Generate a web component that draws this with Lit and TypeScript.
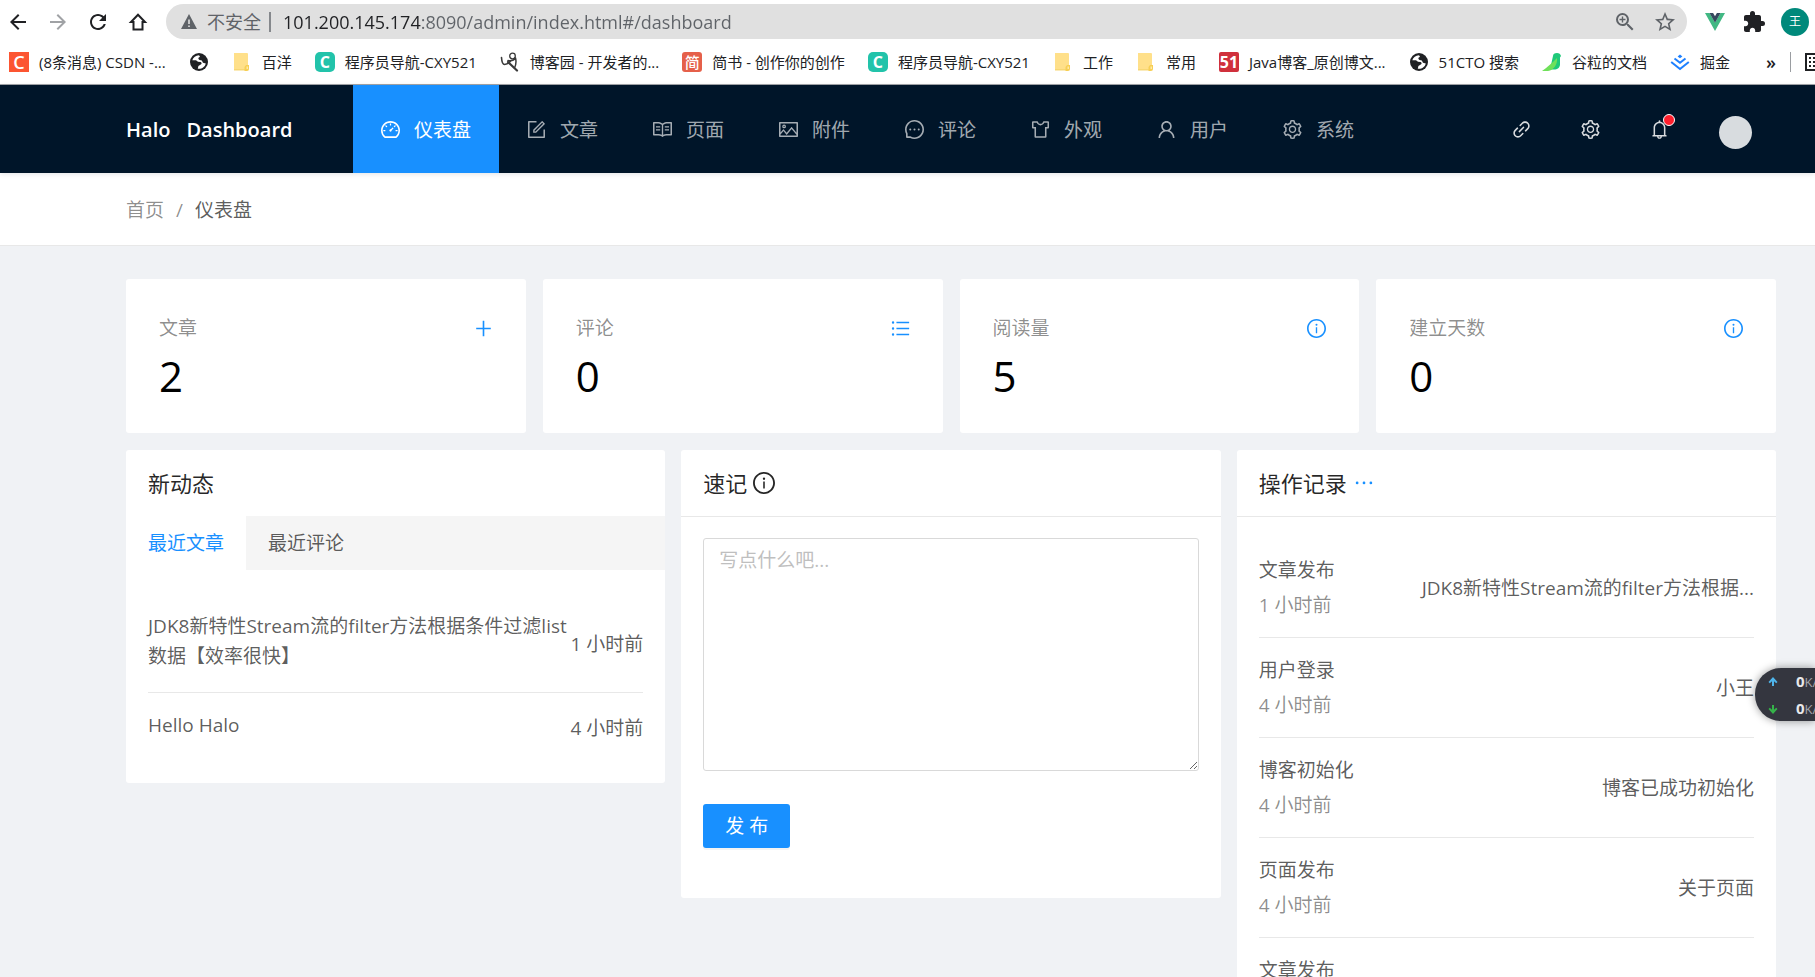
import { LitElement, html, css, svg, nothing, type TemplateResult, type SVGTemplateResult } from "lit";
import { customElement, property, state } from "lit/decorators.js";
import { classMap } from "lit/directives/class-map.js";

/* Outline glyphs, all drawn on a 64 64 896 896 canvas */
const GLYPHS: Record<string, string> = {
  dashboard:
    "M924.8 385.6a446.7 446.7 0 0 0-96-142.4 446.7 446.7 0 0 0-142.4-96C631.1 123.8 572.5 112 512 112s-119.1 11.8-174.4 35.2a446.7 446.7 0 0 0-142.4 96 446.7 446.7 0 0 0-96 142.4C75.8 440.9 64 499.5 64 560c0 132.7 58.3 257.7 159.9 343.1l1.7 1.4c5.8 4.8 13.1 7.5 20.6 7.5h531.7c7.5 0 14.8-2.7 20.6-7.5l1.7-1.4C901.7 817.7 960 692.7 960 560c0-60.5-11.9-119.1-35.2-174.4zM761.4 836H262.6A371.12 371.12 0 0 1 140 560c0-99.4 38.7-192.8 109-263 70.3-70.3 163.7-109 263-109 99.4 0 192.8 38.7 263 109 70.3 70.3 109 163.7 109 263 0 105.6-44.5 205.5-122.6 276zM623.5 421.5a8.03 8.03 0 0 0-11.3 0L527.7 506c-18.7-5-39.4-.2-54.1 14.5a55.95 55.95 0 0 0 0 79.2 55.95 55.95 0 0 0 79.2 0 55.87 55.87 0 0 0 14.5-54.1l84.5-84.5c3.1-3.1 3.1-8.2 0-11.3l-28.3-28.3zM490 320h44c4.4 0 8-3.6 8-8v-80c0-4.4-3.6-8-8-8h-44c-4.4 0-8 3.6-8 8v80c0 4.4 3.6 8 8 8zm260 218v44c0 4.4 3.6 8 8 8h80c4.4 0 8-3.6 8-8v-44c0-4.4-3.6-8-8-8h-80c-4.4 0-8 3.6-8 8zm12.7-197.2l-31.1-31.1a8.03 8.03 0 0 0-11.3 0l-56.6 56.6a8.03 8.03 0 0 0 0 11.3l31.1 31.1c3.1 3.1 8.2 3.1 11.3 0l56.6-56.6c3.1-3.1 3.1-8.2 0-11.3zm-458.6-31.1a8.03 8.03 0 0 0-11.3 0l-31.1 31.1a8.03 8.03 0 0 0 0 11.3l56.6 56.6c3.1 3.1 8.2 3.1 11.3 0l31.1-31.1c3.1-3.1 3.1-8.2 0-11.3l-56.6-56.6zM262 530h-80c-4.4 0-8 3.6-8 8v44c0 4.4 3.6 8 8 8h80c4.4 0 8-3.6 8-8v-44c0-4.4-3.6-8-8-8z",
  form:
    "M904 512h-56c-4.4 0-8 3.6-8 8v320H184V184h320c4.4 0 8-3.6 8-8v-56c0-4.4-3.6-8-8-8H144c-17.7 0-32 14.3-32 32v736c0 17.7 14.3 32 32 32h736c17.7 0 32-14.3 32-32V520c0-4.4-3.6-8-8-8zM355.9 534.9L354 653.8c-.1 8.9 7.1 16.2 16 16.2h.4l118-2.9c2-.1 4-.9 5.4-2.3l415.9-415c3.1-3.1 3.1-8.2 0-11.3L785.4 114.3c-1.6-1.6-3.6-2.3-5.7-2.3s-4.1.8-5.7 2.3l-415.8 415a8.3 8.3 0 0 0-2.3 5.6zm63.5 23.6L779.7 199l45.2 45.1-360.5 359.7-45.7 1.1.7-46.4z",
  read:
    "M928 161H699.2c-49.1 0-97.1 14.1-138.4 40.7L512 233l-48.8-31.3A255.2 255.2 0 0 0 324.8 161H96c-17.7 0-32 14.3-32 32v568c0 17.7 14.3 32 32 32h228.8c49.1 0 97.1 14.1 138.4 40.7l44.4 28.6c1.3.8 2.8 1.3 4.3 1.3s3-.4 4.3-1.3l44.4-28.6C602 807.1 650.1 793 699.2 793H928c17.7 0 32-14.3 32-32V193c0-17.7-14.3-32-32-32zM324.8 721H136V233h188.8c35.4 0 69.8 10.1 99.5 29.2l48.8 31.3 6.9 4.5v462c-47.6-25.6-100.8-39-155.2-39zm563.2 0H699.2c-54.4 0-107.6 13.4-155.2 39V298l6.9-4.5 48.8-31.3c29.7-19.1 64.1-29.2 99.5-29.2H888v488zM396.9 361H211.1c-3.9 0-7.1 3.4-7.1 7.5v45c0 4.1 3.2 7.5 7.1 7.5h185.7c3.9 0 7.1-3.4 7.1-7.5v-45c.1-4.1-3.1-7.5-7-7.5zm223.1 7.5v45c0 4.1 3.2 7.5 7.1 7.5h185.7c3.9 0 7.1-3.4 7.1-7.5v-45c0-4.1-3.2-7.5-7.1-7.5H627.1c-3.9 0-7.1 3.4-7.1 7.5zM396.9 501H211.1c-3.9 0-7.1 3.4-7.1 7.5v45c0 4.1 3.2 7.5 7.1 7.5h185.7c3.9 0 7.1-3.4 7.1-7.5v-45c.1-4.1-3.1-7.5-7-7.5zm416 0H627.1c-3.9 0-7.1 3.4-7.1 7.5v45c0 4.1 3.2 7.5 7.1 7.5h185.7c3.9 0 7.1-3.4 7.1-7.5v-45c.1-4.1-3.1-7.5-7-7.5z",
  picture:
    "M928 160H96c-17.7 0-32 14.3-32 32v640c0 17.7 14.3 32 32 32h832c17.7 0 32-14.3 32-32V192c0-17.7-14.3-32-32-32zm-40 632H136v-39.9l138.5-164.3 150.1 178L658.1 489 888 761.6V792zm0-129.8L664.2 396.8c-3.2-3.8-9-3.8-12.2 0L424.6 666.4l-144-170.7c-3.2-3.8-9-3.8-12.2 0L136 652.7V232h752v430.2zM304 456a88 88 0 1 0 0-176 88 88 0 0 0 0 176zm0-116c15.5 0 28 12.5 28 28s-12.5 28-28 28-28-12.5-28-28 12.5-28 28-28z",
  message:
    "M464 512a48 48 0 1 0 96 0 48 48 0 1 0-96 0zm200 0a48 48 0 1 0 96 0 48 48 0 1 0-96 0zm-400 0a48 48 0 1 0 96 0 48 48 0 1 0-96 0zm661.2-173.6c-22.6-53.7-55-101.9-96.3-143.3a444.35 444.35 0 0 0-143.3-96.3C630.6 75.7 572.2 64 512 64h-2c-60.6.3-119.3 12.3-174.5 35.9a445.35 445.35 0 0 0-142 96.5c-40.9 41.3-73 89.3-95.2 142.8-23 55.4-34.6 114.3-34.3 174.9A449.4 449.4 0 0 0 112 714v152a46 46 0 0 0 46 46h152.1A449.4 449.4 0 0 0 510 960h2.1c59.9 0 118-11.6 172.7-34.3a444.48 444.48 0 0 0 142.8-95.2c41.3-40.9 73.8-88.7 96.5-142 23.6-55.2 35.6-113.9 35.9-174.5.3-60.9-11.5-120-34.8-175.6zm-151.1 438C704 845.8 611 884 512 884h-1.7c-60.3-.3-120.2-15.3-173.1-43.5l-8.4-4.5H188V695.2l-4.5-8.4C155.3 633.9 140.3 574 140 513.7c-.4-99.7 37.7-193.3 107.6-263.8 69.8-70.5 163.1-109.5 262.8-109.9h1.7c50 0 98.5 9.7 144.2 28.9 44.6 18.7 84.6 45.6 119 80 34.3 34.3 61.3 74.4 80 119 19.4 46.2 29.1 95.2 28.9 145.8-.6 99.6-39.7 192.9-110.1 262.7z",
  skin:
    "M870 126H663.8c-17.4 0-32.9 11.9-37 29.3C614.3 208.1 567 246 512 246s-102.3-37.9-114.8-90.7a37.93 37.93 0 0 0-37-29.3H154a44 44 0 0 0-44 44v252a44 44 0 0 0 44 44h75v388a44 44 0 0 0 44 44h478a44 44 0 0 0 44-44V466h75a44 44 0 0 0 44-44V170a44 44 0 0 0-44-44zm-28 268H723v432H301V394H182V198h153.3c28.2 71.2 97.5 120 176.7 120s148.5-48.8 176.7-120H842v196z",
  user:
    "M858.5 763.6a374 374 0 0 0-80.6-119.5 375.63 375.63 0 0 0-119.5-80.6c-.4-.2-.8-.3-1.2-.5C719.5 518 760 444.7 760 362c0-137-111-248-248-248S264 225 264 362c0 82.7 40.5 156 102.8 201.1-.4.2-.8.3-1.2.5-44.8 18.9-85 46-119.5 80.6a375.63 375.63 0 0 0-80.6 119.5A371.7 371.7 0 0 0 136 901.8a8 8 0 0 0 8 8.2h60c4.4 0 7.9-3.5 8-7.8 2-77.2 33-149.5 87.8-204.3 56.7-56.7 132-87.9 212.2-87.9s155.5 31.2 212.2 87.9C779 752.7 810 825 812 902.2c.1 4.4 3.6 7.8 8 7.8h60a8 8 0 0 0 8-8.2c-1-47.8-10.9-94.3-29.5-138.2zM512 534c-45.9 0-89.1-17.9-121.6-50.4S340 407.9 340 362c0-45.9 17.9-89.1 50.4-121.6S466.1 190 512 190s89.1 17.9 121.6 50.4S684 316.1 684 362c0 45.9-17.9 89.1-50.4 121.6S557.9 534 512 534z",
  setting:
    "M924.8 625.7l-65.5-56c3.1-19 4.7-38.4 4.7-57.8s-1.6-38.8-4.7-57.8l65.5-56a32.03 32.03 0 0 0 9.3-35.2l-.9-2.6a443.74 443.74 0 0 0-79.7-137.9l-1.8-2.1a32.12 32.12 0 0 0-35.1-9.5l-81.3 28.9c-30-24.6-63.5-44-99.7-57.6l-15.7-85a32.05 32.05 0 0 0-25.8-25.7l-2.7-.5c-52.1-9.4-106.9-9.4-159 0l-2.7.5a32.05 32.05 0 0 0-25.8 25.7l-15.8 85.4a351.86 351.86 0 0 0-99 57.4l-81.9-29.1a32 32 0 0 0-35.1 9.5l-1.8 2.1a446.02 446.02 0 0 0-79.7 137.9l-.9 2.6c-4.5 12.5-.8 26.5 9.3 35.2l66.3 56.6c-3.1 18.8-4.6 38-4.6 57.1 0 19.2 1.5 38.4 4.6 57.1L99 625.5a32.03 32.03 0 0 0-9.3 35.2l.9 2.6c18.1 50.4 44.9 96.9 79.7 137.9l1.8 2.1a32.12 32.12 0 0 0 35.1 9.5l81.9-29.1c29.8 24.5 63.1 43.9 99 57.4l15.8 85.4a32.05 32.05 0 0 0 25.8 25.7l2.7.5a449.4 449.4 0 0 0 159 0l2.7-.5a32.05 32.05 0 0 0 25.8-25.7l15.7-85a350 350 0 0 0 99.7-57.6l81.3 28.9a32 32 0 0 0 35.1-9.5l1.8-2.1c34.8-41.1 61.6-87.5 79.7-137.9l.9-2.6c4.5-12.3.8-26.3-9.3-35zM788.3 465.9c2.5 15.1 3.8 30.6 3.8 46.1s-1.3 31-3.8 46.1l-6.6 40.1 74.7 63.9a370.03 370.03 0 0 1-42.6 73.6L721 702.8l-31.4 25.8c-23.9 19.6-50.5 35-79.3 45.8l-38.1 14.3-17.9 97a377.5 377.5 0 0 1-85 0l-17.9-97.2-37.8-14.5c-28.5-10.8-55-26.2-78.7-45.7l-31.4-25.9-93.4 33.2c-17-22.9-31.2-47.6-42.6-73.6l75.5-64.5-6.5-40c-2.4-14.9-3.7-30.3-3.7-45.5 0-15.3 1.2-30.6 3.7-45.5l6.5-40-75.5-64.5c11.3-26.1 25.6-50.7 42.6-73.6l93.4 33.2 31.4-25.9c23.7-19.5 50.2-34.9 78.7-45.7l37.9-14.3 17.9-97.2c28.1-3.2 56.8-3.2 85 0l17.9 97 38.1 14.3c28.7 10.8 55.4 26.2 79.3 45.8l31.4 25.8 92.8-32.9c17 22.9 31.2 47.6 42.6 73.6L781.8 426l6.5 39.9zM512 326c-97.2 0-176 78.8-176 176s78.8 176 176 176 176-78.8 176-176-78.8-176-176-176zm79.2 255.2A111.6 111.6 0 0 1 512 614c-29.9 0-58-11.7-79.2-32.8A111.6 111.6 0 0 1 400 502c0-29.9 11.7-58 32.8-79.2C454 401.6 482.1 390 512 390c29.9 0 58 11.6 79.2 32.8A111.6 111.6 0 0 1 624 502c0 29.9-11.7 58-32.8 79.2z",
  link:
    "M574 665.4a8.03 8.03 0 0 0-11.3 0L446.5 781.6c-53.8 53.8-144.6 59.5-204 0-59.5-59.5-53.8-150.2 0-204l116.2-116.2c3.1-3.1 3.1-8.2 0-11.3l-39.8-39.8a8.03 8.03 0 0 0-11.3 0L191.4 526.5c-84.6 84.6-84.6 221.5 0 306s221.5 84.6 306 0l116.2-116.2c3.1-3.1 3.1-8.2 0-11.3L574 665.4zm258.6-474c-84.6-84.6-221.5-84.6-306 0L410.3 307.6a8.03 8.03 0 0 0 0 11.3l39.7 39.7c3.1 3.1 8.2 3.1 11.3 0l116.2-116.2c53.8-53.8 144.6-59.5 204 0 59.5 59.5 53.8 150.2 0 204L665.3 562.6a8.03 8.03 0 0 0 0 11.3l39.8 39.8c3.1 3.1 8.2 3.1 11.3 0l116.2-116.2c84.5-84.6 84.5-221.5 0-306.1zM610.1 372.3a8.03 8.03 0 0 0-11.3 0L372.3 598.7a8.03 8.03 0 0 0 0 11.3l39.6 39.6c3.1 3.1 8.2 3.1 11.3 0l226.4-226.4c3.1-3.1 3.1-8.2 0-11.3l-39.5-39.6z",
  bell:
    "M816 768h-24V428c0-141.1-104.3-257.8-240-277.2V112c0-22.1-17.9-40-40-40s-40 17.9-40 40v38.8C336.3 170.2 232 286.9 232 428v340h-24c-17.7 0-32 14.3-32 32v32c0 4.4 3.6 8 8 8h216c0 61.8 50.2 112 112 112s112-50.2 112-112h216c4.4 0 8-3.6 8-8v-32c0-17.7-14.3-32-32-32zM512 888c-26.5 0-48-21.5-48-48h96c0 26.5-21.5 48-48 48zM304 768V428c0-55.6 21.6-107.8 60.9-147.1S456.4 220 512 220c55.6 0 107.8 21.6 147.1 60.9S720 372.4 720 428v340H304z",
  plus:
    "M482 152h60q8 0 8 8v704q0 8-8 8h-60q-8 0-8-8V160q0-8 8-8zM176 474h672q8 0 8 8v60q0 8-8 8H176q-8 0-8-8v-60q0-8 8-8z",
  list:
    "M912 192H328c-4.4 0-8 3.6-8 8v56c0 4.4 3.6 8 8 8h584c4.4 0 8-3.6 8-8v-56c0-4.4-3.6-8-8-8zm0 284H328c-4.4 0-8 3.6-8 8v56c0 4.4 3.6 8 8 8h584c4.4 0 8-3.6 8-8v-56c0-4.4-3.6-8-8-8zm0 284H328c-4.4 0-8 3.6-8 8v56c0 4.4 3.6 8 8 8h584c4.4 0 8-3.6 8-8v-56c0-4.4-3.6-8-8-8zM104 228a56 56 0 1 0 112 0 56 56 0 1 0-112 0zm0 284a56 56 0 1 0 112 0 56 56 0 1 0-112 0zm0 284a56 56 0 1 0 112 0 56 56 0 1 0-112 0z",
  info:
    "M512 64C264.6 64 64 264.6 64 512s200.6 448 448 448 448-200.6 448-448S759.4 64 512 64zm0 820c-205.4 0-372-166.6-372-372s166.6-372 372-372 372 166.6 372 372-166.6 372-372 372zM464 336a48 48 0 1 0 96 0 48 48 0 1 0-96 0zm72 112h-48c-4.4 0-8 3.6-8 8v272c0 4.4 3.6 8 8 8h48c4.4 0 8-3.6 8-8V456c0-4.4-3.6-8-8-8z",
  ellipsis:
    "M176 511a56 56 0 1 0 112 0 56 56 0 1 0-112 0zm280 0a56 56 0 1 0 112 0 56 56 0 1 0-112 0zm280 0a56 56 0 1 0 112 0 56 56 0 1 0-112 0z",
};

const glyph = (name: string): TemplateResult => html`
  <svg class="glyph" viewBox="64 64 896 896" aria-hidden="true"><path d=${GLYPHS[name]}></path></svg>
`;

const box24 = (content: SVGTemplateResult): TemplateResult => html`
  <svg class="tool-icon" viewBox="0 0 24 24" aria-hidden="true">${content}</svg>
`;

const favicon = (content: SVGTemplateResult): TemplateResult => html`
  <svg class="favicon" viewBox="0 0 20 20" aria-hidden="true">${content}</svg>
`;

const folder = favicon(svg`
  <path d="M2 1h13a1 1 0 0 1 1 1v16H2z" fill="#ffe08a"></path>
  <path d="M2 17h12v1.500H2z" fill="#f7d774"></path>
  <path d="M14 13h3v4a2 2 0 0 1-2 2h-2.500v-4z" fill="#f7cf55"></path>
  <path d="M14.500 14.500h1.500v2.500h-1.500z" fill="#ffe9a8"></path>
`);

const globe = favicon(svg`
  <circle cx="10" cy="10" r="9" fill="#202124"></circle>
  <path d="M10 3.200C6.800 3.400 4.200 5.300 3.300 8.200H7l2 1.600 2.600.2c1.200.3 1.400 2 .2 2.600L9.400 14l-.6 2.700c3.800.6 7.200-1.700 8-5.200l-2.800-.8-1.200-2.300-2.800-.6-.8-1.700L11 4.800z" fill="#fff"></path>
`);

const tile = (text: string, kind: string): TemplateResult =>
  html`<span class="tile ${kind}" aria-hidden="true">${text}</span>`;

interface Bookmark {
  icon: TemplateResult;
  label: string;
}

const BOOKMARKS: Bookmark[] = [
  { icon: tile("C", "csdn"), label: "(8条消息) CSDN -..." },
  { icon: globe, label: "" },
  { icon: folder, label: "百洋" },
  { icon: tile("C", "cxy"), label: "程序员导航-CXY521" },
  {
    icon: favicon(svg`
      <g fill="none" stroke="#3a3a3a" stroke-linecap="round" stroke-linejoin="round">
        <path d="M1.500 5.500c.3 4.500 1 7 3 7s4.500-1.500 6-3.500" stroke-width="1.600"></path>
        <circle cx="12.500" cy="4" r="2.800" stroke-width="1.300"></circle>
        <path d="M8 8.500c3 .5 6 0 7.500-2.500 1 4 .5 7-1 10" stroke-width="1.500"></path>
        <path d="M8 10l9 8.500" stroke-width="2.200"></path>
      </g>`),
    label: "博客园 - 开发者的...",
  },
  { icon: tile("简", "jian"), label: "简书 - 创作你的创作" },
  { icon: tile("C", "cxy"), label: "程序员导航-CXY521" },
  { icon: folder, label: "工作" },
  { icon: folder, label: "常用" },
  { icon: tile("51", "cto"), label: "Java博客_原创博文..." },
  { icon: globe, label: "51CTO 搜索" },
  {
    icon: favicon(svg`
      <path d="M11 4c0-2 1.500-3 4-3 2.200 0 3.500 1.200 4 3l-1 1.500v7c0 3-2.500 5-6 5H8z" fill="#1fc979"></path>
      <path d="M15 6c.8 6-3 12-9 13H0c5-3.500 10-8 15-13z" fill="#6fe05a"></path>`),
    label: "谷粒的文档",
  },
  {
    icon: favicon(svg`
      <path d="M10 2.500l2.400 1.900L10 6.300 7.600 4.400z" fill="#1e80ff"></path>
      <path d="M4.500 6.500L10 10.800l5.500-4.300M1.200 10L10 17l8.800-7" fill="none" stroke="#1e80ff" stroke-width="2"></path>`),
    label: "掘金",
  },
];

const NAV = [
  { icon: "dashboard", label: "仪表盘" },
  { icon: "form", label: "文章" },
  { icon: "read", label: "页面" },
  { icon: "picture", label: "附件" },
  { icon: "message", label: "评论" },
  { icon: "skin", label: "外观" },
  { icon: "user", label: "用户" },
  { icon: "setting", label: "系统" },
];

const STATS = [
  { label: "文章", value: 2, icon: "plus", action: "写文章" },
  { label: "评论", value: 0, icon: "list", action: "查看评论" },
  { label: "阅读量", value: 5, icon: "info", action: "说明" },
  { label: "建立天数", value: 0, icon: "info", action: "说明" },
];

const POSTS = [
  { title: "JDK8新特性Stream流的filter方法根据条件过滤list数据【效率很快】", time: "1 小时前" },
  { title: "Hello Halo", time: "4 小时前" },
];

const LOGS = [
  { type: "文章发布", time: "1 小时前", content: "JDK8新特性Stream流的filter方法根据..." },
  { type: "用户登录", time: "4 小时前", content: "小王" },
  { type: "博客初始化", time: "4 小时前", content: "博客已成功初始化" },
  { type: "页面发布", time: "4 小时前", content: "关于页面" },
  { type: "文章发布", time: "4 小时前", content: "" },
];

const base = css`
  *, *::before, *::after { box-sizing: border-box; }
  a { color: inherit; text-decoration: none; }
  button { font: inherit; color: inherit; background: none; border: 0; padding: 0; cursor: pointer; }
  ul, h1, h2, p { margin: 0; padding: 0; list-style: none; font: inherit; }
  .glyph { display: block; width: 19px; height: 19px; flex: none; fill: currentColor; }
`;

@customElement("browser-bar")
class BrowserBar extends LitElement {
  static styles = [base, css`
    :host { display: block; flex: none; background: #fff; border-bottom: 1px solid #a3a5a8; color: #202124; overflow: hidden; }
    .toolbar { display: flex; align-items: center; gap: 16px; padding: 4px 6px 0; }
    .tool-icon { display: block; width: 24px; height: 24px; fill: currentColor; }
    .muted { color: #a0a2a5; }
    .address { flex: 1; display: flex; align-items: center; height: 35px; padding: 0 10px 0 11px; border-radius: 18px; background: #e0e0e0; color: #5f6368; font-size: 18px; min-width: 0; }
    .warn { font-size: 18px; margin-left: 6px; white-space: nowrap; }
    .rule { width: 2px; height: 20px; margin: 0 12px 0 8px; background: #85888c; }
    .url {
      flex: 1; min-width: 0; height: 32px; border: 0; padding: 0; outline: none; font: inherit;
      -webkit-text-fill-color: transparent;
      background: linear-gradient(90deg, #202124 138px, #5f6368 138px);
      -webkit-background-clip: text; background-clip: text;
    }
    .page-tools { display: flex; gap: 16px; }
    .extensions { display: flex; align-items: center; gap: 15px; }
    .profile { width: 28px; height: 28px; border-radius: 50%; background: #00897b; color: #fff; font-size: 12px; line-height: 28px; text-align: center; }
    .bookmarks { display: flex; align-items: center; height: 45px; padding-left: 9px; font-size: 15px; white-space: nowrap; }
    .links { display: flex; gap: 23px; flex: 1; }
    .bookmark { display: flex; align-items: center; gap: 10px; }
    .favicon { display: block; width: 20px; height: 20px; }
    .tile { display: block; width: 20px; height: 20px; line-height: 20px; text-align: center; color: #fff; font-weight: 700; }
    .csdn { background: #fc5531; font-size: 18px; font-weight: 600; }
    .cxy { background: #22c3aa; border-radius: 5px; font-size: 16px; }
    .jian { background: #e5604a; border-radius: 3px; font-size: 15px; font-weight: 500; }
    .cto { background: #d0303c; border-radius: 2px; font-size: 16px; }
    .more { font-size: 18px; font-weight: 600; line-height: 20px; margin-right: 14px; }
    .divider { width: 1px; height: 20px; background: #9a9da1; margin-right: 14px; }
    .reading { width: 10px; overflow: hidden; }
  `];

  render() {
    return html`
      <div class="toolbar">
        <button aria-label="后退">${box24(svg`<path d="M20 11H7.830l5.590-5.590L12 4l-8 8 8 8 1.410-1.410L7.830 13H20z"></path>`)}</button>
        <button class="muted" aria-label="前进">${box24(svg`<path d="M4 11h12.170l-5.590-5.590L12 4l8 8-8 8-1.410-1.410L16.170 13H4z"></path>`)}</button>
        <button aria-label="重新加载">${box24(svg`<path d="M17.650 6.350C16.200 4.900 14.210 4 12 4c-4.420 0-7.990 3.580-7.990 8s3.570 8 7.990 8c3.730 0 6.840-2.550 7.730-6h-2.080c-.82 2.330-3.040 4-5.650 4-3.310 0-6-2.690-6-6s2.690-6 6-6c1.660 0 3.140.69 4.220 1.780L13 11h7V4l-2.350 2.350z"></path>`)}</button>
        <button aria-label="主页">${box24(svg`<path d="M12 4.800l7 7.200h-2.500v7.500h-9V12H5z" fill="none" stroke="currentColor" stroke-width="2"></path>`)}</button>
        <div class="address">
          ${box24(svg`<path d="M12 4l8 15H4z"></path><path d="M11.200 9.500h1.600v4.500h-1.600zM11.200 15.500h1.600V17h-1.600z" fill="#e0e0e0"></path>`)}
          <label class="warn" for="url">不安全</label>
          <span class="rule"></span>
          <input id="url" class="url" type="text" spellcheck="false" .value=${"101.200.145.174:8090/admin/index.html#/dashboard"} />
          <div class="page-tools">
            <button aria-label="缩放">${box24(svg`<path d="M15.500 14h-.79l-.28-.27A6.471 6.471 0 0 0 16 9.500 6.500 6.500 0 1 0 9.500 16c1.610 0 3.090-.59 4.230-1.570l.27.28v.79l5 4.990L20.490 19l-4.990-5zm-6 0C7.010 14 5 11.990 5 9.500S7.010 5 9.500 5 14 7.010 14 9.500 11.990 14 9.500 14zM12.500 10.200h-2.300v2.300H8.800v-2.300H6.500V8.800h2.300V6.500h1.400v2.300h2.300z"></path>`)}</button>
            <button aria-label="收藏">${box24(svg`<path d="M22 9.240l-7.190-.62L12 2 9.190 8.630 2 9.240l5.460 4.730L5.820 21 12 17.270 18.180 21l-1.630-7.030L22 9.240zM12 15.400l-3.760 2.270 1-4.280-3.320-2.880 4.380-.38L12 6.100l1.710 4.040 4.380.38-3.320 2.880 1 4.280L12 15.400z"></path>`)}</button>
          </div>
        </div>
        <div class="extensions">
          <button aria-label="Vue">${box24(svg`<path d="M2 3h4.500L12 12.500 17.500 3H22L12 21z" fill="#41b883"></path><path d="M6.500 3h3.600L12 6.300 13.900 3h3.600L12 12.800z" fill="#35495e"></path>`)}</button>
          <button aria-label="扩展程序">${box24(svg`<path d="M20.500 11H19V7c0-1.100-.9-2-2-2h-4V3.500a2.500 2.500 0 0 0-5 0V5H4c-1.100 0-1.990.9-1.990 2v3.800H3.500c1.490 0 2.700 1.210 2.700 2.700s-1.210 2.700-2.700 2.700H2V20c0 1.100.9 2 2 2h3.800v-1.500c0-1.490 1.210-2.700 2.700-2.700 1.490 0 2.700 1.210 2.700 2.700V22H17c1.100 0 2-.9 2-2v-4h1.500a2.500 2.500 0 0 0 0-5z"></path>`)}</button>
          <button class="profile" aria-label="个人资料">王</button>
        </div>
      </div>
      <nav class="bookmarks" aria-label="书签">
        <div class="links">
          ${BOOKMARKS.map((b) => html`
            <a class="bookmark" href="#" aria-label=${b.label || "书签"}>
              ${b.icon}${b.label ? html`<span>${b.label}</span>` : nothing}
            </a>`)}
        </div>
        <button class="more" aria-label="更多书签">»</button>
        <span class="divider"></span>
        <button class="reading" aria-label="阅读清单">
          <svg class="favicon" viewBox="0 0 20 20" aria-hidden="true">
            <path d="M1 2h18v16H1z" fill="none" stroke="currentColor" stroke-width="2"></path>
            <path d="M4 5h2v2H4zM4 9h2v2H4zM4 13h2v2H4zM8 5h8v2H8zM8 9h8v2H8zM8 13h8v2H8z" fill="currentColor"></path>
          </svg>
        </button>
      </nav>
    `;
  }
}

@customElement("admin-header")
class AdminHeader extends LitElement {
  @state() private active = "仪表盘";

  static styles = [base, css`
    :host { display: flex; flex: none; align-items: center; height: 88px; padding: 0 63px 0 126px; background: #001529; box-shadow: 0 1px 5px rgba(0, 21, 41, 0.12); position: relative; z-index: 1; }
    .logo { display: flex; gap: 16px; width: 227px; flex: none; padding-top: 2px; color: #fff; font-size: 20px; font-weight: 600; }
    .menu { display: flex; align-self: stretch; flex: 1; }
    .item { display: flex; align-items: center; gap: 14px; padding: 0 27px 0 28px; color: rgba(255, 255, 255, 0.65); white-space: nowrap; }
    .item.active { padding-right: 28px; background: #1890ff; color: #fff; }
    .label { padding-top: 2px; }
    .actions { display: flex; align-items: center; gap: 50px; color: rgba(255, 255, 255, 0.85); }
    .bell { position: relative; }
    .dot { position: absolute; top: -6px; right: -6px; width: 12px; height: 12px; border-radius: 50%; background: #ff1f2d; border: 1px solid #fff; }
    .avatar { width: 33px; height: 33px; margin-top: 7px; border-radius: 50%; background: #d8dcdf; }
  `];

  render() {
    return html`
      <a class="logo" href="#"><span>Halo</span><span>Dashboard</span></a>
      <nav class="menu">
        ${NAV.map((n) => html`
          <a class=${classMap({ item: true, active: n.label === this.active })} href="#"
             @click=${() => (this.active = n.label)}>${glyph(n.icon)}<span class="label">${n.label}</span></a>`)}
      </nav>
      <div class="actions">
        <a href="#" aria-label="访问站点">${glyph("link")}</a>
        <button aria-label="设置">${glyph("setting")}</button>
        <button class="bell" aria-label="通知">${glyph("bell")}<span class="dot"></span></button>
        <button class="avatar" aria-label="用户头像"></button>
      </div>
    `;
  }
}

@customElement("stat-card")
class StatCard extends LitElement {
  @property() label = "";
  @property({ type: Number }) value = 0;
  @property() icon = "";
  @property() action = "";

  static styles = [base, css`
    :host { display: block; padding: 34px 33px 31px; background: #fff; border-radius: 3px; }
    .top { display: flex; align-items: center; justify-content: space-between; line-height: 30px; color: rgba(0, 0, 0, 0.45); }
    .action { color: #1890ff; }
    .value { margin-top: 7px; font-size: 42px; line-height: 52px; color: #000; }
  `];

  render() {
    return html`
      <div class="top"><span>${this.label}</span><button class="action" aria-label=${this.action}>${glyph(this.icon)}</button></div>
      <p class="value">${this.value}</p>
    `;
  }
}

@customElement("app-root")
class AppRoot extends LitElement {
  @state() private tab = 0;

  static styles = [base, css`
    :host {
      display: flex; flex-direction: column; height: 100vh; position: relative; overflow: hidden;
      font-family: "Open Sans", "Noto Sans CJK SC", sans-serif; font-size: 19px; line-height: 30px;
      color: rgba(0, 0, 0, 0.65); background: #f0f2f5;
    }
    .page { flex: 1; min-height: 0; overflow-y: auto; scrollbar-width: none; }
    .crumbs { display: flex; gap: 12px; padding: 22px 39px 20px 126px; background: #fff; border-bottom: 1px solid #e8e8e8; color: rgba(0, 0, 0, 0.45); }
    .current { color: rgba(0, 0, 0, 0.65); }
    .content { display: grid; gap: 17px; padding: 33px 39px 33px 126px; }
    .stats { display: grid; grid-template-columns: repeat(4, minmax(0, 1fr)); gap: 17px; }
    .panels { display: grid; grid-template-columns: repeat(3, minmax(0, 1fr)); gap: 16px; align-items: start; }
    .card { background: #fff; border-radius: 3px; overflow: hidden; }
    .head { display: flex; align-items: center; gap: 6px; height: 67px; padding: 0 22px; border-bottom: 1px solid #e8e8e8; color: rgba(0, 0, 0, 0.85); font-size: 22px; }
    .head .glyph { width: 22px; height: 22px; }
    .head.plain { height: 66px; border: 0; }
    .blue { color: #1890ff; }
    .tabs { display: flex; background: #f5f5f5; }
    .tab { height: 54px; padding: 0 22px; }
    .tab.on { background: #fff; color: #1890ff; }
    .posts { padding: 24px 22px 22px; }
    .row { display: flex; align-items: center; justify-content: space-between; padding: 17px 0; border-bottom: 1px solid #e8e8e8; }
    .row:last-child { border-bottom: 0; }
    .title { margin-bottom: 5px; flex: 1; min-width: 0; }
    .post { padding-bottom: 16px; }
    .time { white-space: nowrap; }
    .body { padding: 21px 22px; }
    .note { display: flex; flex-direction: column; align-items: flex-start; gap: 33px; padding-bottom: 50px; }
    .editor { display: block; width: 100%; height: 233px; padding: 6px 15px; border: 1px solid #d9d9d9; border-radius: 3px; font: inherit; color: inherit; resize: vertical; outline: none; }
    .editor::placeholder { color: #bfbfbf; }
    .publish { height: 44px; padding: 0 22px; border-radius: 3px; background: #1890ff; color: #fff; box-shadow: 0 2px 0 rgba(0, 0, 0, 0.045); }
    .log { display: grid; gap: 5px; white-space: nowrap; }
    .sub { color: rgba(0, 0, 0, 0.45); }
    .net {
      position: absolute; top: 668px; right: 0; z-index: 2; width: 60px; height: 53px; padding-left: 13px; overflow: hidden;
      border-radius: 26px 0 0 26px; background: #34363f; box-shadow: 0 0 8px rgba(0, 0, 0, 0.4);
      display: grid; grid-template-rows: 1fr 1fr; color: #e8e8ea; font-size: 15px; line-height: 26px; white-space: nowrap;
    }
    .speed { display: flex; align-items: center; }
    .arrow { display: block; width: 10px; height: 10px; margin-right: 18px; flex: none; }
    .rate { font-weight: 700; }
    .unit { font-size: 13px; font-weight: 400; color: #a5a7ad; }
  `];

  private tabs() {
    return ["最近文章", "最近评论"].map((name, i) => html`
      <button role="tab" aria-selected=${this.tab === i ? "true" : "false"}
        class=${classMap({ tab: true, on: this.tab === i })} @click=${() => (this.tab = i)}>${name}</button>`);
  }

  private speed(color: string, d: string) {
    return html`
      <div class="speed">
        <svg class="arrow" viewBox="0 0 10 10" aria-hidden="true"><path d=${d} fill=${color}></path></svg>
        <span class="rate">0<span class="unit">K/s</span></span>
      </div>`;
  }

  render() {
    return html`
      <browser-bar></browser-bar>
      <admin-header></admin-header>
      <div class="page">
        <nav class="crumbs" aria-label="面包屑">
          <a href="#">首页</a><span>/</span><span class="current">仪表盘</span>
        </nav>
        <main class="content">
          <section class="stats">
            ${STATS.map((s) => html`<stat-card .label=${s.label} .value=${s.value} .icon=${s.icon} .action=${s.action}></stat-card>`)}
          </section>
          <section class="panels">
            <article class="card">
              <h2 class="head plain">新动态</h2>
              <div class="tabs" role="tablist">${this.tabs()}</div>
              <ul class="posts">
                ${POSTS.map((p) => html`
                  <li class="row post"><a class="title" href="#">${p.title}</a><span class="time">${p.time}</span></li>`)}
              </ul>
            </article>
            <article class="card">
              <h2 class="head"><label for="note">速记</label>${glyph("info")}</h2>
              <div class="body note">
                <textarea id="note" class="editor" placeholder="写点什么吧..."></textarea>
                <button class="publish">发 布</button>
              </div>
            </article>
            <article class="card">
              <h2 class="head">操作记录<a class="blue" href="#" aria-label="更多">${glyph("ellipsis")}</a></h2>
              <ul class="body">
                ${LOGS.map((l) => html`
                  <li class="row">
                    <div class="log"><span>${l.type}</span><span class="sub">${l.time}</span></div>
                    <span class="time">${l.content}</span>
                  </li>`)}
              </ul>
            </article>
          </section>
        </main>
      </div>
      <aside class="net" aria-label="网速">
        ${this.speed("#4fb4ea", "M5 0l4.500 5-1.300 1.300L6 4.300V9H4V4.300L1.800 6.300.5 5z")}
        ${this.speed("#35b34a", "M5 10L.5 5l1.300-1.300L4 5.700V1h2v4.700l2.200-2L9.500 5z")}
      </aside>
    `;
  }
}
